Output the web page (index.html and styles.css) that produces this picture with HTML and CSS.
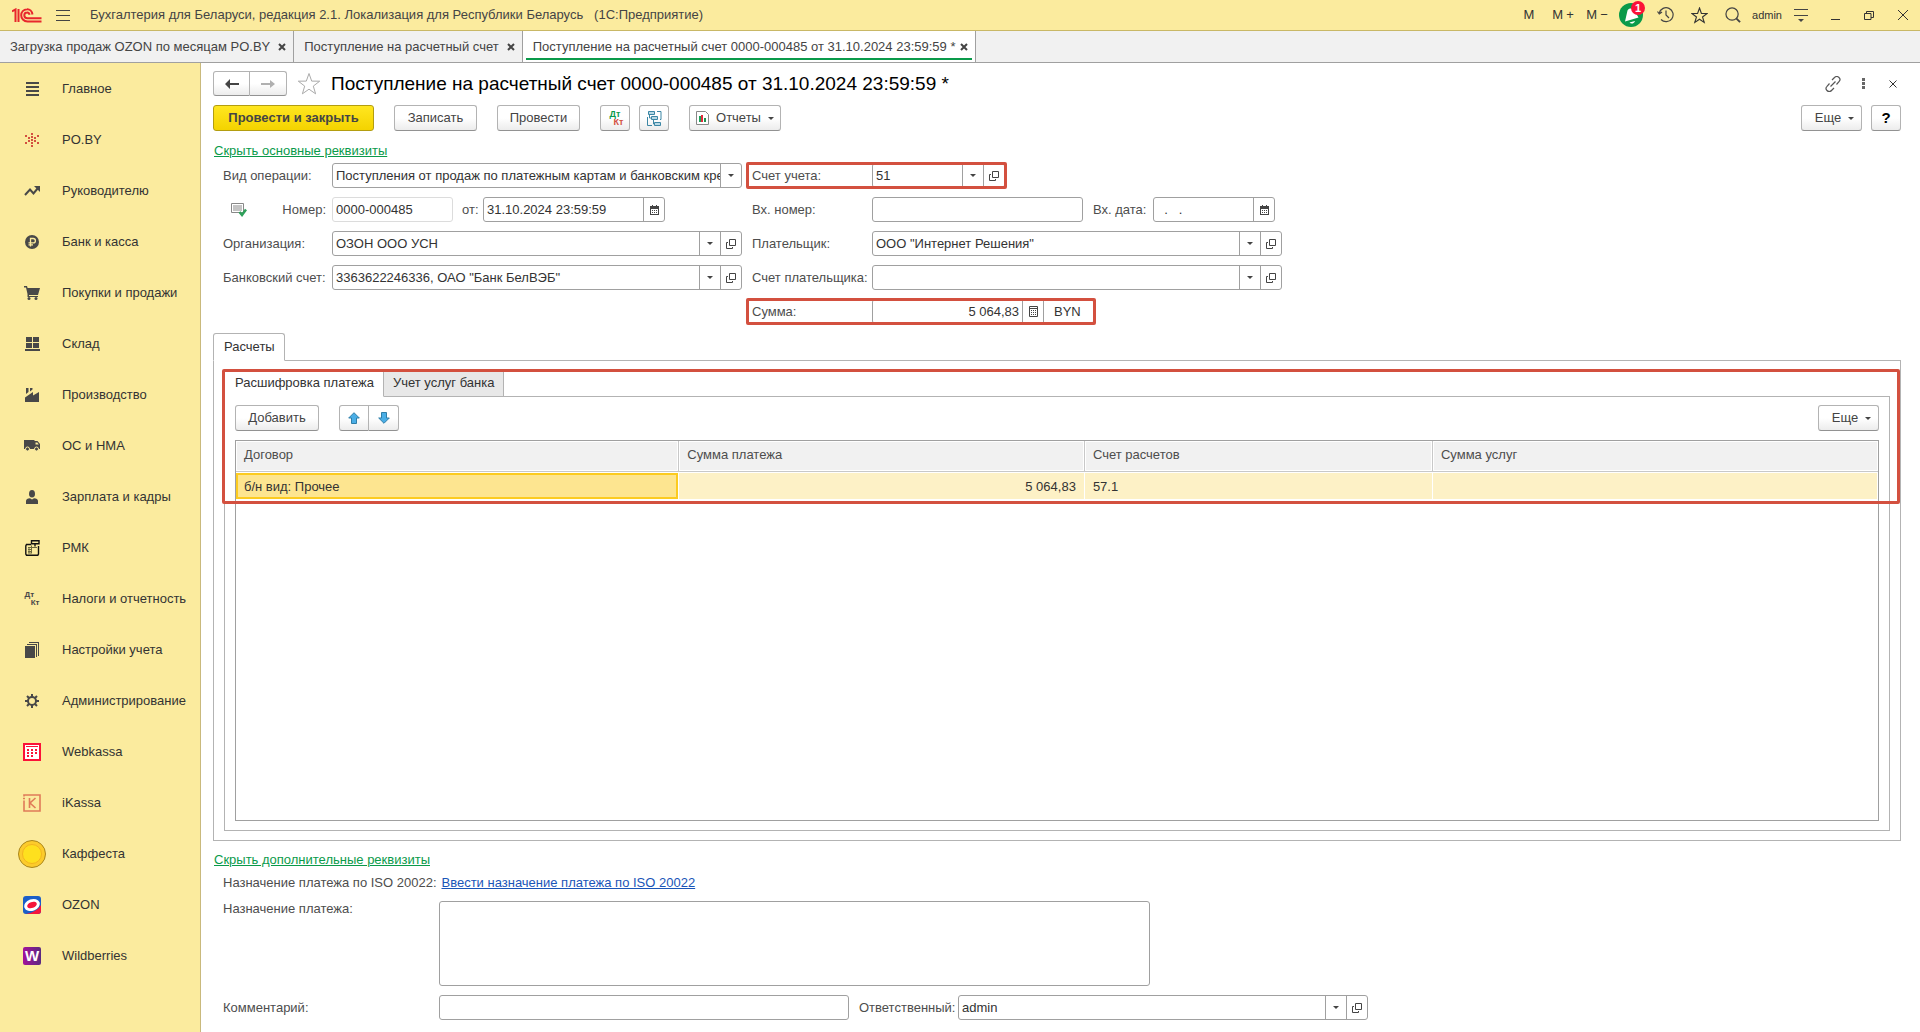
FILE: index.html
```html
<!DOCTYPE html>
<html lang="ru">
<head>
<meta charset="utf-8">
<meta name="viewport" content="width=device-width, initial-scale=1">
<title>Поступление на расчетный счет 0000-000485</title>
<link rel="stylesheet" href="styles.css">
</head>
<body>
<svg class="sprite" aria-hidden="true">
  <symbol id="caret" viewBox="0 0 6 3"><path d="M0 0h6L3 3z"/></symbol>
  <symbol id="open" viewBox="0 0 10 10"><path d="M3.500.5h6v6h-6zM2 3.500H.5v6h6V8" fill="none" stroke="#444"/></symbol>
  <symbol id="calendar" viewBox="0 0 9 10"><path d="M0 1h9v9H0z" fill="#444"/><path d="M2 0h1v2H2zM6 0h1v2H6z" fill="#444"/><path d="M1 4h7v5H1z" fill="#fff"/><path d="M2 5h1v1H2zM4 5h1v1H4zM6 5h1v1H6zM2 7h1v1H2zM4 7h1v1H4zM6 7h1v1H6z" fill="#444"/></symbol>
  <symbol id="calc" viewBox="0 0 9 11"><path d="M.5.5h8v10h-8z" fill="#fff" stroke="#444"/><path d="M0 2h9v1H0zM2 4h1v1H2zM4 4h1v1H4zM6 4h1v1H6zM2 6h1v1H2zM4 6h1v1H4zM6 6h1v1H6zM2 8h1v1H2zM4 8h1v1H4zM6 8h1v1H6z" fill="#444"/></symbol>
  <symbol id="star" viewBox="0 0 24 24"><path d="M12 1.500l2.700 7.600 8 .1-6.400 4.900 2.300 7.700L12 17.200l-6.600 4.600 2.300-7.700L1.300 9.200l8-.1z" fill="none" stroke="currentColor"/></symbol>
</svg>

<header class="topbar">
  <svg class="logo" viewBox="0 0 30 15" width="30" height="15" aria-label="1C"><g fill="none" stroke="#e8272d" stroke-width="2"><path d="M0 3.500L3.500 1.500V14M6.500 14V1"/><path d="M20.500 6.500C20 3 17.500 1 15 1.200C11.500 1.400 9.200 4 9.200 7.200S11.700 13.500 15.500 13.500H29.500"/><path d="M17.600 6.800C17.200 5 16.200 4.300 15 4.400 13.200 4.500 12.300 5.800 12.300 7.300S13.500 10.300 15.500 10.300H29.500"/></g></svg>
  <button class="plain burger" aria-label="Меню"><svg width="14" height="11" viewBox="0 0 14 11"><path d="M0 .5h14M0 5.500h14M0 10.500h14" stroke="#444"/></svg></button>
  <span class="app-title">Бухгалтерия для Беларуси, редакция 2.1. Локализация для Республики Беларусь &nbsp; (1С:Предприятие)</span>
  <div class="top-tools">
    <button class="plain">M</button>
    <button class="plain mem">M<span>+</span></button>
    <button class="plain mem">M<span>−</span></button>
    <button class="plain bell" aria-label="Уведомления"><svg width="24" height="24" viewBox="0 0 24 24"><circle cx="12" cy="12" r="12" fill="#0a9a4a"/><path d="M6 18.500L8.500 7.500C10 5 13 5 15 7L19.500 14.500zM10.500 19.500l5.500-1.500c-.5 2.500-4 3.500-5.500 1.500z" fill="#fff"/></svg><span class="badge">1</span></button>
    <button class="plain" aria-label="История"><svg width="17" height="16" viewBox="0 0 17 16" fill="none" stroke="#444" stroke-width="1.200"><path d="M2.300 6A7 7 0 1 1 4 12.500M9 3.500V8l3 3M.5 4.500L2.300 7 5 5"/></svg></button>
    <button class="plain" aria-label="Избранное"><svg width="17" height="17"><use href="#star" stroke-width="1.600"/></svg></button>
    <button class="plain" aria-label="Поиск"><svg width="16" height="16" viewBox="0 0 17 17" fill="none" stroke="#444" stroke-width="1.300"><circle cx="7.500" cy="7.500" r="6.500"/><path d="M12 12l4 4" stroke-width="2"/></svg></button>
    <button class="plain user">admin</button>
    <button class="plain" aria-label="Настройки"><svg width="14" height="13" viewBox="0 0 14 13"><path d="M0 .5h14M0 6.500h14" stroke="#444"/><path d="M4 10h6l-3 3z" fill="#444"/></svg></button>
    <button class="plain" aria-label="Свернуть"><svg width="9" height="9" viewBox="0 0 9 9"><path d="M0 8.500h9" stroke="#333"/></svg></button>
    <button class="plain" aria-label="Восстановить"><svg width="10" height="9" viewBox="0 0 10 9" fill="none" stroke="#333"><path d="M.5 2.500h6.500v6H.5zM2.500 2.500v-2h7v6H7"/></svg></button>
    <button class="plain" aria-label="Закрыть"><svg width="10" height="10" viewBox="0 0 10 10"><path d="M0 0l10 10M10 0L0 10" stroke="#333"/></svg></button>
  </div>
</header>

<nav class="window-tabs">
  <a class="wtab" href="#">Загрузка продаж OZON по месяцам PO.BY<svg class="x" viewBox="0 0 8 8"><path d="M1 1l6 6M7 1L1 7"/></svg></a>
  <a class="wtab" href="#">Поступление на расчетный счет<svg class="x" viewBox="0 0 8 8"><path d="M1 1l6 6M7 1L1 7"/></svg></a>
  <a class="wtab current" href="#">Поступление на расчетный счет 0000-000485 от 31.10.2024 23:59:59 *<svg class="x" viewBox="0 0 8 8"><path d="M1 1l6 6M7 1L1 7"/></svg></a>
</nav>

<div class="workspace">
  <nav class="sections">
    <a href="#"><span class="ico"><svg width="13" height="14" viewBox="0 0 13 14"><path d="M0 0h13v2H0zM0 4h13v2H0zM0 8h13v2H0zM0 12h13v2H0z"/></svg></span>Главное</a>
    <a href="#"><span class="ico"><svg width="14" height="14" viewBox="0 0 14 14" fill="#d3503f"><path d="M6 0h2v2H6zM6 3h2v2H6zM6 6h2v2H6zM6 9h2v2H6zM6 12h2v2H6zM3 4h2v2H3zM9 4h2v2H9zM3 7h2v2H3zM9 7h2v2H9zM0 2h2v2H0zM12 2h2v2h-2zM0 9h2v2H0zM12 9h2v2h-2z"/></svg></span>PO.BY</a>
    <a href="#"><span class="ico"><svg width="16" height="10" viewBox="0 0 16 10"><path d="M1 9l5-5.500 3.500 4L14 2" fill="none" stroke="#484848" stroke-width="2"/><path d="M10 0h6v6z"/></svg></span>Руководителю</a>
    <a href="#"><span class="ico"><svg width="14" height="14" viewBox="0 0 14 14"><circle cx="7" cy="7" r="7"/><path d="M5.500 11.500V3.500h2.700a2.200 2.200 0 0 1 0 4.400H3.500M3.500 9.800H8" fill="none" stroke="#fbeb9e" stroke-width="1.300"/></svg></span>Банк и касса</a>
    <a href="#"><span class="ico"><svg width="16" height="14" viewBox="0 0 16 14"><path d="M0 0h3l.6 2H16l-2 7H5v1h9v1H3.500V8L2 1.500H0z"/><circle cx="5" cy="12.500" r="1.500"/><circle cx="12" cy="12.500" r="1.500"/></svg></span>Покупки и продажи</a>
    <a href="#"><span class="ico"><svg width="15" height="14" viewBox="0 0 15 14"><path d="M1 0h6v5H1zM8 0h6v5H8zM1 6h6v5H1zM8 6h6v5H8zM0 12h15v2H0z"/></svg></span>Склад</a>
    <a href="#"><span class="ico"><svg width="14" height="14" viewBox="0 0 14 14"><path d="M0 14V9.500L8 4v3.500L14 4v10zM1 0h2.500v4L1 6zM5 0h2.500v1.500L5 3.500z"/></svg></span>Производство</a>
    <a href="#"><span class="ico"><svg width="16" height="11" viewBox="0 0 16 11"><path d="M0 0h10.500v9H0zM10.500 1h3l2.500 3v5h-5.500z"/><path d="M11.500 2.500h1.800l1.500 2h-3.300z" fill="#fbeb9e"/><circle cx="3.500" cy="9" r="2" stroke="#fbeb9e"/><circle cx="12.500" cy="9" r="2" stroke="#fbeb9e"/></svg></span>ОС и НМА</a>
    <a href="#"><span class="ico"><svg width="12" height="14" viewBox="0 0 12 14"><ellipse cx="6" cy="3.800" rx="3" ry="3.800"/><path d="M0 14v-3c0-1.500 1.500-2.500 4-2.700L6 9.500l2-1.200c2.500.2 4 1.200 4 2.700v3z"/></svg></span>Зарплата и кадры</a>
    <a href="#"><span class="ico"><svg width="15" height="16" viewBox="0 0 15 16" fill="none" stroke="#111"><path d="M6 4.500H1.500L.8 6v8l.7 1.200h11.300l.7-1.200V6" stroke-width="1.400"/><path d="M6.500.7h7.500v3H6.500zM10 4v2.500" stroke-width="1.400"/><path d="M3 7.500h9M3 9.500h4M3 11.500h4M3 13h4M4 7v6M6.500 5.500V13" stroke="#6d6a3c"/></svg></span>РМК</a>
    <a href="#"><span class="ico"><span class="dtkt"><span>Дт</span><span>Кт</span></span></span>Налоги и отчетность</a>
    <a href="#"><span class="ico"><svg width="14" height="16" viewBox="0 0 14 16"><path d="M0 4h10v12H0zM2 2h10v13h-1V3H2zM4 0h10v14h-1V1H4z"/></svg></span>Настройки учета</a>
    <a href="#"><span class="ico"><svg width="14" height="14" viewBox="0 0 14 14" fill="none" stroke="#484848"><circle cx="7" cy="7" r="4" stroke-width="2"/><path d="M7 0v3M7 11v3M0 7h3M11 7h3M2 2l2 2M10 10l2 2M12 2l-2 2M4 10l-2 2" stroke-width="2"/></svg></span>Администрирование</a>
    <a href="#"><span class="ico"><svg width="18" height="18" viewBox="0 0 18 18"><rect x="1" y="1" width="16" height="16" fill="#fff" stroke="#fb1237" stroke-width="2"/><path d="M3 3h12v1H3zM4 6h2v2H4zM8 6h2v2H8zM12 6h2v2h-2zM4 9h2v2H4zM8 9h2v2H8zM12 9h2v2h-2zM4 12h2v2H4zM8 12h2v2H8z" fill="#fb1237"/></svg></span>Webkassa</a>
    <a href="#"><span class="ico"><svg width="18" height="18" viewBox="0 0 18 18" fill="none" stroke="#e07b58" stroke-width="1.600"><path d="M1 2.500V1h16v16H1V6.500M6.500 4v10M12.500 4L7 9l5.500 5"/><path d="M0 4.500h2"/></svg></span>iKassa</a>
    <a href="#"><span class="ico"><svg width="28" height="28" viewBox="0 0 28 28"><circle cx="14" cy="14" r="13.500" fill="#fccb2c" stroke="#a9861c"/><circle cx="14" cy="14" r="9.500" fill="#fee01e" stroke="#f4b51f"/></svg></span>Каффеста</a>
    <a href="#"><span class="ico"><svg width="18" height="18" viewBox="0 0 18 18"><rect width="18" height="18" rx="3" fill="#1b5ec8"/><path d="M3 18C9 17 15 14 18 9v6a3 3 0 0 1-3 3z" fill="#f5153c"/><g transform="rotate(-20 9 9)"><ellipse cx="9" cy="9" rx="8" ry="5.800" fill="#fff"/><ellipse cx="9" cy="9" rx="5" ry="3" fill="#f5153c"/></g></svg></span>OZON</a>
    <a href="#"><span class="ico"><span class="wb">W</span></span>Wildberries</a>
  </nav>

  <main class="form">
    <div class="titlerow">
      <div class="btn-group">
        <button class="btn nav-btn" aria-label="Назад"><svg width="14" height="10" viewBox="0 0 14 10"><path d="M0 5l5-5v4h9v2H5v4z" fill="#444"/></svg></button><button class="btn nav-btn" aria-label="Вперед"><svg width="14" height="10" viewBox="0 0 14 10"><path d="M14 5L9 1v3H0v2h9v3z" fill="#b0b0b0"/></svg></button>
      </div>
      <button class="plain fav" aria-label="В избранное"><svg width="24" height="24"><use href="#star"/></svg></button>
      <h1>Поступление на расчетный счет 0000-000485 от 31.10.2024 23:59:59 *</h1>
      <div class="form-tools">
        <button class="plain" aria-label="Ссылка"><svg width="16" height="16" viewBox="0 0 16 16" fill="none" stroke="#555" stroke-width="1.200"><path d="M7 4l2.500-2.500a3 3 0 0 1 4.500 0 3 3 0 0 1 0 4.200L11.500 8.500M9 12l-2.500 2.500a3 3 0 0 1-4.500 0 3 3 0 0 1 0-4.200L4.500 7.500M5.500 10.500l5-5"/></svg></button>
        <button class="plain" aria-label="Действия"><svg width="3" height="11" viewBox="0 0 3 11"><path d="M0 0h3v3H0zM0 4h3v3H0zM0 8h3v3H0z" fill="#666"/></svg></button>
        <button class="plain" aria-label="Закрыть форму"><svg width="8" height="8" viewBox="0 0 8 8"><path d="M.5.5l7 7M7.500.5l-7 7" stroke="#333"/></svg></button>
      </div>
    </div>

    <div class="commands">
      <button class="btn primary">Провести и закрыть</button>
      <button class="btn post">Записать</button>
      <button class="btn post">Провести</button>
      <div class="pair">
        <button class="btn square" aria-label="Движения документа"><span class="dtkt colored"><span>Дт</span><span>Кт</span></span></button>
        <button class="btn square" aria-label="Структура подчиненности"><svg width="15" height="15" viewBox="0 0 15 15" fill="#b9d9e6" stroke="#3c87a5"><path d="M1.500.5h6v3h-6zM4.500 5.500h6v3h-6zM7.500 11.500h6v3h-6z"/><path d="M10 .5h4v8h-1M.5 6v8.500H5M2.500 4v3H4M6.500 9v4H7" fill="none"/></svg></button>
      </div>
      <button class="btn reports"><svg width="13" height="14" viewBox="0 0 13 14"><path d="M.5.5h9l3 3v10H.5z" fill="#fff" stroke="#888"/><path d="M3 5h2v6H3z" fill="#1aa35a"/><path d="M5 4h2v7H5z" fill="#e02b3c"/><path d="M8 7h2v4H8z" fill="#1c9150"/></svg>Отчеты<svg class="caret"><use href="#caret"/></svg></button>
      <div class="right-cmds">
        <button class="btn more">Еще<svg class="caret"><use href="#caret"/></svg></button>
        <button class="btn square help">?</button>
      </div>
    </div>

    <a class="toggle" href="#">Скрыть основные реквизиты</a>

    <div class="fields">
      <div class="row">
        <label class="lab" for="op">Вид операции:</label>
        <div class="field wide"><select id="op"><option>Поступления от продаж по платежным картам и банковским кредитам</option></select><span class="fbtn"><svg class="caret"><use href="#caret"/></svg></span></div>
      </div>
      <div class="row">
        <div class="marked">
          <label class="lab2" for="acc">Счет учета:</label>
          <div class="field acc"><input id="acc" value="51"><button class="fbtn" aria-label="Выбрать"><svg class="caret"><use href="#caret"/></svg></button><button class="fbtn" aria-label="Открыть"><svg class="open"><use href="#open"/></svg></button></div>
        </div>
      </div>

      <div class="row">
        <div class="lab numlab"><svg width="16" height="14" viewBox="0 0 16 14"><path d="M.5.5h12v9H.5z" fill="#fff" stroke="#888"/><path d="M2 3h9M2 5h9M2 7h9" stroke="#888"/><path d="M8.500 9l2.500 3 4-5.500" fill="none" stroke="#2ea05a" stroke-width="2.500"/></svg><label for="num">Номер:</label></div>
        <div class="field number"><input id="num" value="0000-000485"></div>
        <label class="from" for="date">от:</label>
        <div class="field date"><input id="date" value="31.10.2024 23:59:59"><button class="fbtn" aria-label="Календарь"><svg class="cal"><use href="#calendar"/></svg></button></div>
      </div>
      <div class="row">
        <label class="lab2" for="innum">Вх. номер:</label>
        <div class="field innum"><input id="innum"></div>
        <label class="indate-lab" for="indate">Вх. дата:</label>
        <div class="field indate"><input id="indate" value="  .   ."><button class="fbtn" aria-label="Календарь"><svg class="cal"><use href="#calendar"/></svg></button></div>
      </div>

      <div class="row">
        <label class="lab" for="org">Организация:</label>
        <div class="field wide"><input id="org" value="ОЗОН ООО УСН"><button class="fbtn" aria-label="Выбрать"><svg class="caret"><use href="#caret"/></svg></button><button class="fbtn" aria-label="Открыть"><svg class="open"><use href="#open"/></svg></button></div>
      </div>
      <div class="row">
        <label class="lab2" for="payer">Плательщик:</label>
        <div class="field wide"><input id="payer" value="ООО &quot;Интернет Решения&quot;"><button class="fbtn" aria-label="Выбрать"><svg class="caret"><use href="#caret"/></svg></button><button class="fbtn" aria-label="Открыть"><svg class="open"><use href="#open"/></svg></button></div>
      </div>

      <div class="row">
        <label class="lab" for="bank">Банковский счет:</label>
        <div class="field wide"><input id="bank" value="3363622246336, ОАО &quot;Банк БелВЭБ&quot;"><button class="fbtn" aria-label="Выбрать"><svg class="caret"><use href="#caret"/></svg></button><button class="fbtn" aria-label="Открыть"><svg class="open"><use href="#open"/></svg></button></div>
      </div>
      <div class="row">
        <label class="lab2" for="payeracc">Счет плательщика:</label>
        <div class="field wide"><input id="payeracc"><button class="fbtn" aria-label="Выбрать"><svg class="caret"><use href="#caret"/></svg></button><button class="fbtn" aria-label="Открыть"><svg class="open"><use href="#open"/></svg></button></div>
      </div>

      <div class="row second">
        <div class="marked">
          <label class="lab2" for="sum">Сумма:</label>
          <div class="field sum"><input id="sum" class="num" value="5 064,83"><button class="fbtn" aria-label="Калькулятор"><svg class="calc"><use href="#calc"/></svg></button><span class="currency">BYN</span></div>
        </div>
      </div>
    </div>

    <div class="tabs"><button class="tab active">Расчеты</button></div>
    <section class="panel outer">
      <div class="detail">
        <div class="tabs inner-tabs"><button class="tab active">Расшифровка платежа</button><button class="tab">Учет услуг банка</button></div>
        <div class="panel inner">
          <div class="table-bar">
            <button class="btn add">Добавить</button>
            <div class="btn-group">
              <button class="btn move" aria-label="Вверх"><svg width="12" height="12" viewBox="0 0 12 12"><path d="M6 .7L11.300 6H8.500v5.500h-5V6H.7z" fill="#4aaee6" stroke="#2f7ea8"/></svg></button><button class="btn move" aria-label="Вниз"><svg width="12" height="12" viewBox="0 0 12 12"><path d="M6 11.300L.7 6h2.800V.5h5V6h2.800z" fill="#4aaee6" stroke="#2f7ea8"/></svg></button>
            </div>
            <button class="btn more">Еще<svg class="caret"><use href="#caret"/></svg></button>
          </div>
          <div class="table-wrap">
            <table>
              <colgroup><col class="c1"><col class="c2"><col class="c3"><col></colgroup>
              <thead><tr><th>Договор</th><th>Сумма платежа</th><th>Счет расчетов</th><th>Сумма услуг</th></tr></thead>
              <tbody><tr><td class="selected">б/н вид: Прочее</td><td class="num">5 064,83</td><td>57.1</td><td></td></tr></tbody>
            </table>
          </div>
        </div>
        <div class="mark"></div>
      </div>
    </section>

    <a class="toggle extra" href="#">Скрыть дополнительные реквизиты</a>
    <div class="iso"><span>Назначение платежа по ISO 20022:</span><a href="#">Ввести назначение платежа по ISO 20022</a></div>
    <div class="row purpose">
      <label class="lab3" for="purpose">Назначение платежа:</label>
      <textarea id="purpose"></textarea>
    </div>
    <div class="row comment">
      <label class="lab3" for="comment">Комментарий:</label>
      <div class="field wide"><input id="comment"></div>
      <label class="resp-lab" for="resp">Ответственный:</label>
      <div class="field wide"><input id="resp" value="admin"><button class="fbtn" aria-label="Выбрать"><svg class="caret"><use href="#caret"/></svg></button><button class="fbtn" aria-label="Открыть"><svg class="open"><use href="#open"/></svg></button></div>
    </div>
  </main>
</div>
</body>
</html>
```
FILE: styles.css
```css
* { box-sizing: border-box; }

body {
  margin: 0;
  min-height: 100vh;
  display: flex;
  flex-direction: column;
  background: #fff;
  color: #333;
  font: 13px/16px "Liberation Sans", Arial, sans-serif;
}

button, input, select, textarea { font: inherit; color: inherit; margin: 0; }
a { color: inherit; text-decoration: none; }
svg { flex: none; }
.sprite { display: none; }

.plain {
  display: flex;
  align-items: center;
  justify-content: center;
  padding: 0;
  border: 0;
  background: none;
  color: #333;
}

/* Window header */
.topbar {
  display: flex;
  align-items: center;
  height: 31px;
  padding-left: 12px;
  background: #fbeb9e;
  border-bottom: 1px solid #c9b866;
}
.burger { margin: 0 20px 0 14px; }
.app-title { white-space: nowrap; color: #444; }
.top-tools { display: flex; margin-left: auto; }
.top-tools .plain { width: 34px; height: 30px; }
.top-tools .mem { gap: 3px; }
.top-tools .user { font-size: 11px; }
.bell { position: relative; }
.badge {
  position: absolute;
  top: 1px;
  left: 17px;
  width: 14px;
  height: 14px;
  border-radius: 50%;
  background: #fb1237;
  color: #fff;
  font: bold 11px/14px "Liberation Sans", Arial, sans-serif;
  text-align: center;
}

/* Open windows */
.window-tabs {
  display: flex;
  height: 32px;
  background: #f1f1f1;
  border-bottom: 1px solid #a0a0a0;
}
.wtab {
  display: flex;
  align-items: center;
  gap: 8px;
  padding: 0 7px 0 10px;
  border-right: 1px solid #a0a0a0;
  white-space: nowrap;
  color: #444;
}
.wtab.current {
  gap: 5px;
  background: linear-gradient(#0a9a4a, #0a9a4a) center bottom 2px / calc(100% - 6px) 2px no-repeat #fff;
}
.x { width: 8px; height: 8px; fill: none; stroke: #444; stroke-width: 2; }

.workspace { display: flex; flex: 1; }

/* Sections panel */
.sections {
  flex: none;
  width: 201px;
  background: #fbeb9e;
  border-right: 1px solid #c9b97c;
}
.sections a {
  display: flex;
  align-items: center;
  gap: 16px;
  height: 51px;
  padding-left: 18px;
  white-space: nowrap;
}
.ico { display: flex; justify-content: center; width: 28px; fill: #484848; }
.dtkt {
  display: flex;
  flex-direction: column;
  width: 15px;
  font: bold 8px/8px "Liberation Sans", Arial, sans-serif;
  color: #484848;
}
.dtkt span + span { align-self: flex-end; }
.dtkt.colored { width: 17px; font-size: 9px; color: #0a9a4a; }
.dtkt.colored span + span { color: #d3503f; }
.wb {
  width: 18px;
  height: 18px;
  border-radius: 2px;
  background: linear-gradient(90deg, #a3119b, #5a2a80);
  color: #fff;
  font: bold 15px/18px "Liberation Sans", Arial, sans-serif;
  text-align: center;
}

/* Document form */
.form {
  flex: 1;
  display: flex;
  flex-direction: column;
  min-width: 0;
  padding: 8px 19px 12px 12px;
}
.titlerow { display: flex; align-items: center; height: 25px; }
h1 {
  margin: 0;
  color: #000;
  font-size: 19px;
  line-height: 24px;
  font-weight: normal;
  white-space: nowrap;
}
.fav { margin: 0 10px; color: #aaa; }
.form-tools { display: flex; gap: 14px; margin-left: auto; }
.form-tools .plain { width: 16px; height: 24px; }

.btn {
  display: flex;
  align-items: center;
  justify-content: center;
  height: 26px;
  padding: 0;
  border: 1px solid #b3b3b3;
  border-bottom-color: #929292;
  border-radius: 3px;
  background: linear-gradient(#fff 50%, #ececec);
  color: #444;
}
.btn-group { display: flex; }
.btn-group .btn:first-child { border-radius: 3px 0 0 3px; }
.btn-group .btn:last-child { border-radius: 0 3px 3px 0; border-left: 0; }
.nav-btn { width: 37px; height: 25px; }
.move { width: 30px; }
.primary {
  width: 161px;
  border-color: #b39d10;
  background: linear-gradient(#ffe620, #f4d300);
  font-weight: bold;
}
.post { width: 83px; }
.add { width: 84px; }
.square { width: 30px; }
.help { color: #000; font-size: 15px; font-weight: bold; }
.more { width: 61px; gap: 7px; padding-left: 6px; }
.reports { width: 92px; gap: 7px; }
.caret { width: 6px; height: 3px; fill: #444; }
.open { width: 10px; height: 10px; }
.cal { width: 9px; height: 10px; }
.calc { width: 9px; height: 11px; }

.commands { display: flex; gap: 20px; margin-top: 9px; }
.pair, .right-cmds { display: flex; gap: 9px; }
.right-cmds { margin-left: auto; }

.toggle {
  align-self: flex-start;
  margin: 12px 0 4px 1px;
  color: #0a9a4a;
  text-decoration: underline;
}

.fields {
  display: grid;
  grid-template-columns: 519px 1fr;
  gap: 9px 10px;
  padding-left: 10px;
}
.row { display: flex; align-items: center; }
.row label, .marked label { flex: none; color: #4d4d4d; white-space: nowrap; }
.lab { width: 109px; }
.lab2 { width: 120px; }
.second { grid-column: 2; }

.field {
  display: flex;
  flex: none;
  height: 25px;
  border: 1px solid #a0a0a0;
  border-radius: 3px;
  background: #fff;
}
.field input, .field select {
  flex: 1;
  min-width: 0;
  padding: 0 3px;
  border: 0;
  background: none;
  outline: none;
}
.field select { appearance: none; padding-right: 0; text-overflow: clip; }
.fbtn {
  display: flex;
  flex: none;
  align-items: center;
  justify-content: center;
  width: 21px;
  padding: 0;
  border: 0;
  border-left: 1px solid #a0a0a0;
  background: none;
}
.wide { width: 410px; }
.number { width: 121px; border-color: #dcdcdc; }
.numlab { display: flex; align-items: center; justify-content: space-between; padding: 0 6px 0 8px; }
.from { width: 30px; padding-left: 9px; }
.date { width: 182px; }
.innum { width: 211px; }
.indate { width: 122px; }
.indate-lab { width: 70px; padding-left: 10px; }
.acc { width: 133px; }
.sum { width: 222px; }
.num { text-align: right; }
.currency {
  width: 50px;
  padding-left: 10px;
  border-left: 1px solid #a0a0a0;
  line-height: 23px;
}

/* Red marks over the highlighted areas */
.marked { position: relative; display: flex; align-items: center; }
.marked::after, .mark {
  content: "";
  position: absolute;
  border: 3px solid #d3503f;
  border-radius: 2px;
  pointer-events: none;
}
.marked::after { inset: -1px -2px -1px -6px; }

/* Tabbed panels */
.tabs { display: flex; margin: 9px 0 -1px; }
.tab {
  height: 28px;
  padding: 0 9px;
  border: 1px solid #b3b3b3;
  background: #e8e8e8;
}
.tab.active {
  position: relative;
  padding-left: 10px;
  border-bottom-color: #fff;
  border-radius: 3px 3px 0 0;
  background: #fff;
}
.tab + .tab { border-left: 0; }
.panel {
  display: flex;
  flex: 1;
  flex-direction: column;
  border: 1px solid #b3b3b3;
}
.outer { padding: 8px 10px 9px; }
.detail { position: relative; display: flex; flex: 1; flex-direction: column; }
.inner-tabs { margin-top: 0; }
.inner-tabs .active { border-right-color: #b3b3b3; }
.inner { padding: 8px 10px 9px; }
.mark { top: 0; left: -2px; right: -10px; height: 135px; }
.table-bar { display: flex; gap: 20px; }
.table-bar .more { margin-left: auto; }
.table-wrap {
  flex: 1;
  min-height: 120px;
  margin-top: 9px;
  border: 1px solid #a0a0a0;
}
table { width: 100%; table-layout: fixed; border-collapse: separate; border-spacing: 0; }
.c1 { width: 27%; }
.c2 { width: 24.7%; }
.c3 { width: 21.2%; }
th {
  height: 31px;
  padding: 0 8px 2px;
  border: 0 solid #c8c8c8;
  border-width: 0 1px 1px 0;
  box-shadow: inset 0 0 0 1px #fff;
  background: #f1f1f1;
  color: #4d4d4d;
  font-weight: normal;
  text-align: left;
}
th:last-child { border-right: 0; }
td {
  height: 28px;
  padding: 1px 8px 0;
  border: 0 solid #fff;
  border-width: 1px 1px 1px 0;
  background: #fdf1c6;
}
td.selected { background: #fde590; box-shadow: inset 0 0 0 2px #fccb20; }

/* Additional details */
.extra { margin: 11px 0 7px 1px; }
.iso { display: flex; gap: 5px; padding-left: 10px; color: #4d4d4d; }
.iso a { color: #1a55b8; text-decoration: underline; }
.purpose { align-items: flex-start; margin-top: 10px; padding-left: 10px; }
.comment { margin-top: 9px; padding-left: 10px; }
.lab3 { width: 216px; }
.resp-lab { width: 109px; padding-left: 10px; }
textarea {
  width: 711px;
  height: 85px;
  padding: 3px;
  border: 1px solid #a0a0a0;
  border-radius: 3px;
  resize: none;
}
```
